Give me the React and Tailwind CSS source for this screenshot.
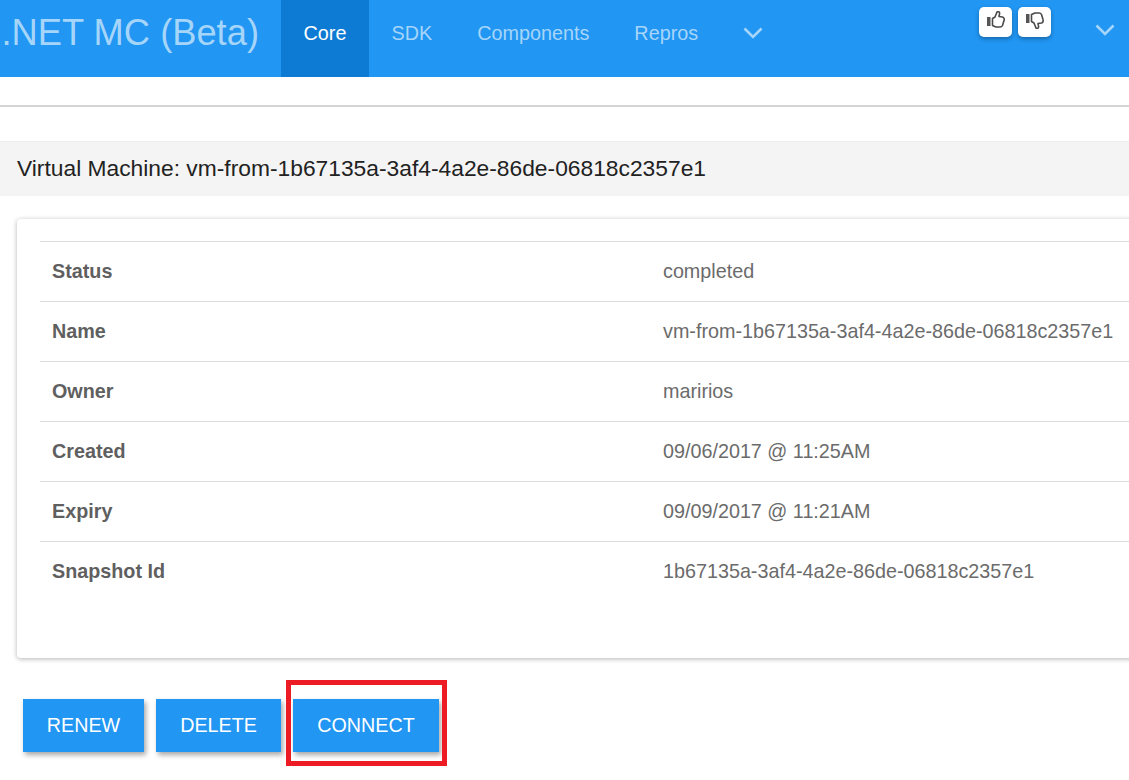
import React from 'react';

const tabs = ['SDK', 'Components', 'Repros'];

const rows = [
  ['Status', 'completed'],
  ['Name', 'vm-from-1b67135a-3af4-4a2e-86de-06818c2357e1'],
  ['Owner', 'maririos'],
  ['Created', '09/06/2017 @ 11:25AM'],
  ['Expiry', '09/09/2017 @ 11:21AM'],
  ['Snapshot Id', '1b67135a-3af4-4a2e-86de-06818c2357e1'],
];

const Chevron = ({ className }) => (
  <svg width="20" height="12" viewBox="0 0 20 12" fill="none" className={className}>
    <path d="M1.5 1.5 L10 10 L18.5 1.5" stroke="#a6d5fa" strokeWidth="2.6" />
  </svg>
);

const Thumb = ({ down }) => (
  <svg width="18" height="17" viewBox="0 0 18 17" fill="none" className={down ? '-scale-y-100' : ''}>
    <rect x="0" y="6" width="3.5" height="9" fill="#555555" />
    <path
      d="M5.5 7.5 L8 6 L10 1 C11.5 0 13 1 12.5 3 L12 5.5 L15.5 6 C17 6.5 17.5 8 17 9.5 L15.5 14.5 C15 15.5 14 16 13 16 L9 16 L5.5 14.5 Z"
      stroke="#4a4a4a"
      strokeWidth="1.6"
      strokeLinejoin="round"
    />
  </svg>
);

const ThumbButton = ({ down }) => (
  <button className={`flex h-[30px] w-[33px] items-center justify-center rounded-[5px] bg-white shadow-[0_2px_4px_rgba(0,0,0,0.3)] ${down ? 'pb-[4px]' : 'pb-[6px]'}`}>
    <Thumb down={down} />
  </button>
);

const ActionButton = ({ label, className }) => (
  <button className={`h-[53px] bg-[#2196f3] text-[19.7px] text-white uppercase shadow-[2px_3px_5px_rgba(0,0,0,0.35)] ${className}`}>
    {label}
  </button>
);

const App = () => {
  return (
    <div className="relative h-[780px] w-[1129px] overflow-hidden bg-white font-['Liberation_Sans',Arial,sans-serif]">
      <header className="flex h-[77px] items-stretch bg-[#2196f3]">
        <div className="ml-[1.5px] w-[279.5px] pt-[11px] text-[36.3px] leading-[44px] text-[#a6d5fa]">.NET MC (Beta)</div>
        <nav className="flex items-stretch pb-[9px] text-[19.8px] text-[#a6d5fa]">
          <a className="-mb-[9px] flex w-[88px] items-center justify-center bg-[#0d7bd4] pb-[9px] text-white">Core</a>
          {tabs.map((tab) => (
            <a key={tab} className="flex items-center px-[22.5px]">
              {tab}
            </a>
          ))}
          <span className="ml-[22px] flex items-center pb-[2px]">
            <Chevron />
          </span>
        </nav>
        <div className="ml-auto flex items-start">
          <div className="mt-[7px] flex gap-[6px]">
            <ThumbButton />
            <ThumbButton down />
          </div>
          <div className="mt-[24px] mr-[14px] ml-[44px]">
            <Chevron />
          </div>
        </div>
      </header>

      <hr className="mt-[28px] border-t-2 border-[#d4d4d4]" />

      <h2 className="mt-[34px] flex h-[55px] items-center border-t border-[#eeeeee] bg-[#f4f4f4] pb-[2px] pl-[17px] text-[22.8px] font-normal text-[#222222]">
        Virtual Machine: vm-from-1b67135a-3af4-4a2e-86de-06818c2357e1
      </h2>

      <section className="mt-[23px] ml-[17px] h-[439px] w-[1200px] rounded-[4px] bg-white pt-[22px] pl-[23px] shadow-[0_1px_5px_rgba(0,0,0,0.3)]">
        <div>
          {rows.map(([label, value]) => (
            <div key={label} className="flex h-[60px] items-center border-t border-[#dddddd] pl-[12px] text-[19.75px]">
              <div className="w-[611px] font-bold text-[#5f5f5f]">{label}</div>
              <div className="text-[#6b6b6b]">{value}</div>
            </div>
          ))}
        </div>
      </section>

      <div className="mt-[41px] ml-[23px] flex gap-[12px]">
        <ActionButton label="Renew" className="w-[121px]" />
        <ActionButton label="Delete" className="w-[125px]" />
        <ActionButton label="Connect" className="w-[146px]" />
      </div>

      {/* red highlight drawn on top of the screenshot */}
      <div className="absolute top-[680px] left-[286px] h-[86px] w-[161px] border-[5px] border-[#ed1c24]" />
    </div>
  );
};

export default App;
